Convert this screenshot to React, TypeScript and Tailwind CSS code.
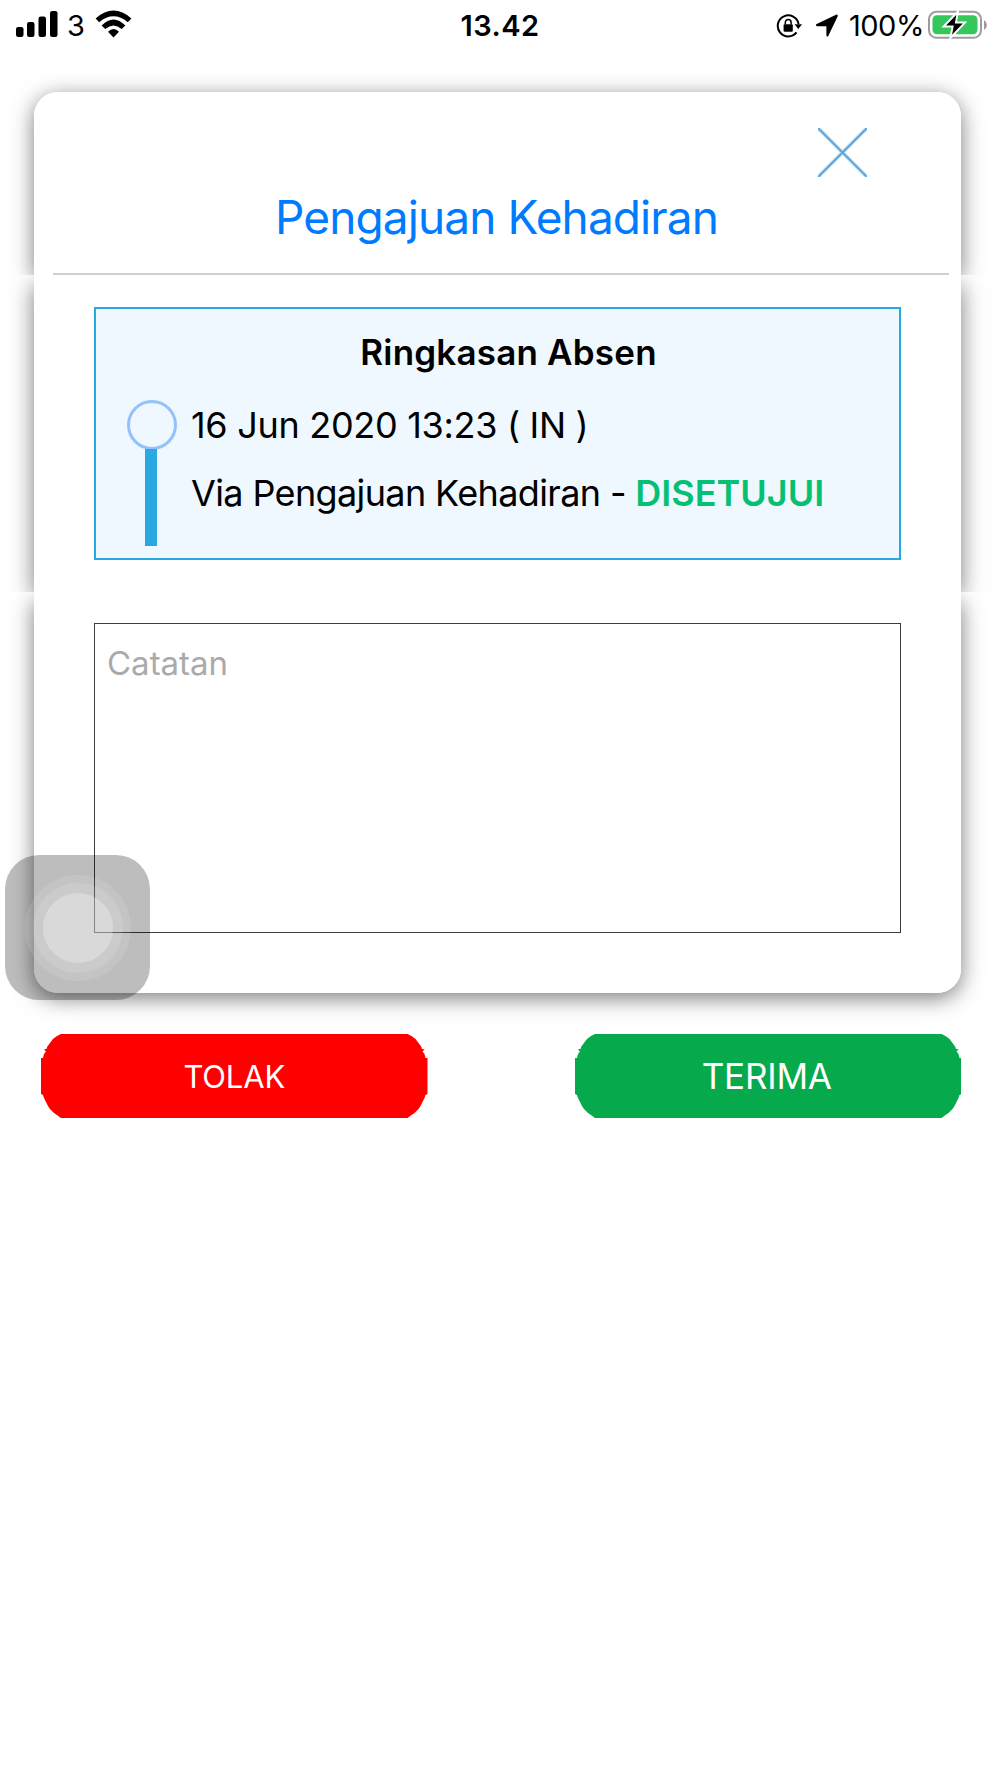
import type { ReactNode } from "react";

function StatusBar() {
  return (
    <header className="flex h-[51px] w-full items-center px-4 text-black">
      <div className="flex flex-1 items-center">
        <svg
          className="-mt-[3px]"
          width="42"
          height="26"
          viewBox="0 0 42 26"
          fill="currentColor"
        >
          <rect x="0" y="16" width="7.5" height="10" rx="2.2" />
          <rect x="11" y="11" width="7.5" height="15" rx="2.2" />
          <rect x="22.5" y="5.5" width="7.5" height="20.5" rx="2.2" />
          <rect x="34" y="0" width="7.5" height="26" rx="2.2" />
        </svg>
        <span className="ml-[9px] w-[20px] text-[29px] leading-[50px]">3</span>
        <svg
          className="-mt-[4px] ml-2"
          width="38"
          height="28"
          viewBox="0 0 38 28"
          fill="currentColor"
        >
          <path d="M0.6 8.4Q18.5 -7.4 36.4 8.4L32.8 12.2Q18.5 0.4 4.2 12.2Z" />
          <path d="M6.6 15.4Q18.5 3.4 30.4 15.4L26.7 19Q18.5 11.8 10.3 19Z" />
          <path d="M13 21.8Q18.5 16.2 24 21.8L18.5 27.6Z" />
        </svg>
      </div>

      <span className="pt-px text-[29px] font-semibold leading-[50px] tracking-[0.5px]">
        13.42
      </span>

      <div className="flex flex-1 items-center justify-end">
        {/* rotation lock */}
        <svg
          className="mr-px"
          width="27"
          height="26"
          viewBox="0 0 27 26"
          fill="none"
        >
          <path
            d="M20.5 19.4A10.5 10.5 0 1 1 22.6 11"
            stroke="black"
            strokeWidth="2"
          />
          <path d="M18.6 11.2H26L22.3 16Z" fill="black" />
          <rect x="7.6" y="11.3" width="9.2" height="7.4" rx="1" fill="black" />
          <path
            d="M9.3 11.5V9.4a2.9 2.9 0 0 1 5.8 0V11.5"
            stroke="black"
            strokeWidth="1.5"
          />
        </svg>
        {/* location */}
        <svg
          className="ml-[11px]"
          width="24"
          height="24"
          viewBox="0 0 24 24"
          fill="black"
        >
          <path d="M1.2 10.2L21 0.8Q23.4 0 22.6 2.4L13.4 21.8Q12.2 23.6 11.4 21.6V12.3H2Q0 11.4 1.2 10.2Z" />
        </svg>
        <span className="ml-[10px] w-[74px] whitespace-nowrap text-[29px] leading-[50px] tracking-[-0.5px]">
          100%
        </span>
        {/* battery, charging */}
        <svg
          className="-mr-[4px] -mt-[2px] ml-[5px]"
          width="60"
          height="30"
          viewBox="0 0 60 30"
          fill="none"
        >
          <rect
            x="1"
            y="1.8"
            width="52"
            height="26"
            rx="7.5"
            stroke="#9d9d9d"
            strokeWidth="2"
          />
          <rect x="4.5" y="5.3" width="45" height="19" rx="4.5" fill="#34c759" />
          <path d="M56 10Q59 12 59 15T56 20Z" fill="#9d9d9d" />
          <path
            d="M29.8 1.8L15.6 16.6H24.6L22.4 28L37 12.6H28Z"
            fill="black"
            stroke="white"
            strokeWidth="2"
            strokeLinejoin="miter"
          />
        </svg>
      </div>
    </header>
  );
}

type PanelProps = {
  className: string;
  clip: string;
  shadow: string;
  children: ReactNode;
};

// Each slice of the card casts its own shadow, cut off at the slice edges
function Panel({ className, clip, shadow, children }: PanelProps) {
  return (
    <section className={`relative ${clip}`}>
      <div
        className={`absolute inset-x-0 bottom-0 shadow-[0_5px_22px_rgba(0,0,0,0.52)] ${shadow}`}
      />
      <div className={`relative bg-white ${className}`}>{children}</div>
    </section>
  );
}

type ActionProps = {
  label: string;
  shape: string;
  text: string;
};

function ActionButton({ label, shape, text }: ActionProps) {
  return (
    <button
      type="button"
      className="relative flex h-[84px] w-[386.5px] items-center justify-center text-white"
    >
      <svg
        className={`absolute inset-0 h-full w-full ${shape}`}
        viewBox="0 0 387 84"
        preserveAspectRatio="none"
        fill="currentColor"
      >
        <path d="M20 0L16 2L12 5L9 9L6 13V14.5L3 15.5L5 17.5L3 20L2 24H0V60L2 61L3 64L5 68L7 72L9 75L13 79L16 81L20 84H367L371 81L374 79L378 75L380 72L382 68L384 64L385 61L387 60V24H385L384 20L382 17.5L384 15.5L381 14.5V13L378 9L375 5L371 2L367 0Z" />
      </svg>
      <span className={`relative ${text}`}>{label}</span>
    </button>
  );
}

export default function App() {
  return (
    <div className="relative flex h-[1778px] w-[1000px] flex-col overflow-hidden bg-white font-['Inter','Liberation_Sans',sans-serif]">
      <StatusBar />

      <main className="flex flex-col">
        {/* CARD */}
        <div className="ml-[34px] mt-[41px] w-[927px]">
          <Panel
            className="flex h-[183px] flex-col rounded-t-[24px] pt-9"
            clip="[clip-path:inset(-42px_-34px_0_-34px)]"
            shadow="top-0 rounded-t-[24px]"
          >
            <button type="button" className="mr-[94px] self-end">
              <svg width="49" height="49" viewBox="0 0 49 49" fill="none">
                <path
                  d="M0 0L49 49M49 0L0 49"
                  stroke="#3c92d4"
                  strokeOpacity="0.3"
                  strokeWidth="4"
                />
                <path
                  d="M0 0L49 49M49 0L0 49"
                  stroke="#3c92d4"
                  strokeOpacity="0.8"
                  strokeWidth="1.8"
                />
              </svg>
            </button>
            <h1 className="mr-[2px] mt-[10px] text-center text-[46px] leading-[60px] tracking-[-0.9px] text-[#007aff]">
              Pengajuan Kehadiran
            </h1>
            <div className="ml-[19px] mr-3 mt-auto h-[2px] bg-[#d0d0d0]" />
          </Panel>

          <Panel
            className="h-[317px] px-[60px] pt-8"
            clip="[clip-path:inset(0_-39px_0_-34px)]"
            shadow="top-[5px]"
          >
            <div className="h-[253px] border-2 border-[#29a7e1] bg-[#eff7ff]">
              <h2 className="ml-[22px] mt-[19px] text-center text-[35px] font-semibold leading-[48px] tracking-[0.2px]">
                Ringkasan Absen
              </h2>
              <div className="mt-[24px] flex">
                <div className="ml-[31px] flex w-[50px] flex-col items-center">
                  <div className="h-[50px] w-[50px] rounded-full border-[3px] border-[#95c1fb]" />
                  <div className="-mt-px mr-[2px] h-[97px] w-3 bg-[#29a8e1]" />
                </div>
                <div className="ml-[14px] flex flex-col gap-5 whitespace-nowrap pt-px text-[36px] leading-[48px]">
                  <p className="tracking-[-0.3px]">16 Jun 2020 13:23 ( IN )</p>
                  <p className="tracking-[-0.63px]">
                    Via Pengajuan Kehadiran -{" "}
                    <span className="font-semibold tracking-[0px] text-[#05c073]">
                      DISETUJUI
                    </span>
                  </p>
                </div>
              </div>
            </div>
          </Panel>

          <Panel
            className="h-[401px] rounded-b-[24px] px-[60px] pt-[31px]"
            clip="[clip-path:inset(0_-39px_-50px_-34px)]"
            shadow="top-[5px] rounded-b-[24px]"
          >
            <textarea
              placeholder="Catatan"
              className="block h-[310px] w-[807px] resize-none border border-[#3c3c3c] px-3 py-[15px] text-[33px] leading-[48px] tracking-[0px] placeholder:text-[#aaaaaa]"
            />
          </Panel>
        </div>

        {/* ACTIONS */}
        <div className="ml-[41px] mt-[41px] flex w-[920px] justify-between">
          <ActionButton
            label="TOLAK"
            shape="text-[#ff0000]"
            text="pt-[2px] text-[31px] tracking-[-0.2px]"
          />
          <ActionButton
            label="TERIMA"
            shape="text-[#07a94d]"
            text="pr-[2px] pt-px text-[35px] tracking-[-0.2px]"
          />
        </div>
      </main>

      {/* ASSISTIVE TOUCH */}
      <div className="absolute left-[5px] top-[855px] flex h-[145px] w-[145px] items-center justify-center rounded-[34px] bg-black/26">
        <div className="flex h-[106px] w-[106px] items-center justify-center rounded-full bg-white/10">
          <div className="flex h-[90px] w-[90px] items-center justify-center rounded-full bg-white/12">
            <div className="h-[70px] w-[70px] rounded-full bg-white/27" />
          </div>
        </div>
      </div>
    </div>
  );
}
